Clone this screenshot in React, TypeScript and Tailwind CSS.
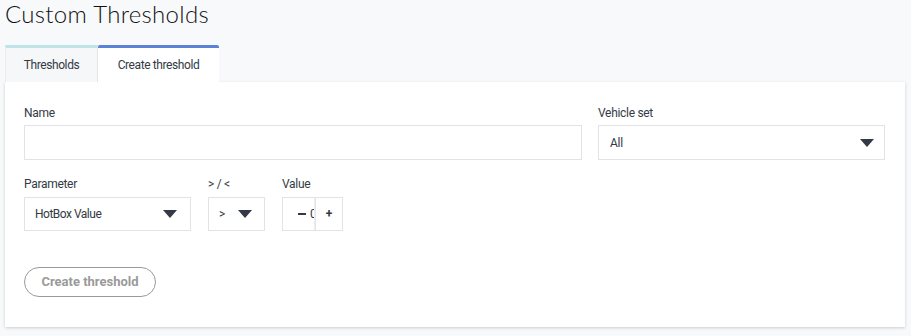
import React from "react";

const Caret = () => (
  <svg width="14" height="8" viewBox="0 0 14 8"><path d="M0 0 L14 0 L7 8 Z" fill="#333a45" /></svg>
);

export default function App() {
  return (
    <div className="w-[911px] h-[336px] bg-[#f8f9fb] overflow-hidden" style={{ fontFamily: "Roboto, 'Liberation Sans', sans-serif" }}>
      <div className="pl-[5px] pt-0 h-[45px]">
        <h1 className="text-[24px] leading-[27px] font-light text-[#111] tracking-[0.3px]" style={{ fontFamily: "Lato, Inter, sans-serif" }}>Custom Thresholds</h1>
      </div>
      <div className="flex pl-[5px]">
        <div className="w-[93px] h-[37px] border-t-[3px] border-[#bfe3e6] bg-[#f6f7f9] flex items-center justify-center text-[12px] tracking-[-0.4px] text-[#333a45] border-r border-r-[#e4e4e4] border-l border-l-[#ececec]">Thresholds</div>
        <div className="w-[121px] h-[37px] border-t-[3px] border-[#5b82d4] bg-white flex items-center justify-center text-[12px] tracking-[-0.4px] text-[#333a45] rounded-t-[2px]">Create threshold</div>
      </div>
      <div className="ml-[5px] w-[900px] h-[245px] bg-white shadow-[0_1px_3px_rgba(0,0,0,0.18)] px-[19px] pt-[24px]">
        <div className="flex gap-[16px]">
          <div className="w-[558px]">
            <div className="text-[12px] tracking-[-0.3px] text-[#333a45] leading-[14px] mb-[5px]">Name</div>
            <div className="h-[35px] border border-[#e3e3e6]" />
          </div>
          <div className="w-[287px]">
            <div className="text-[12px] tracking-[-0.3px] text-[#333a45] leading-[14px] mb-[5px]">Vehicle set</div>
            <div className="h-[35px] border border-[#e3e3e6] flex items-center justify-between pl-[11px] pr-[10px] text-[12px] tracking-[-0.3px] text-[#333a45]">
              <span>All</span>
              <Caret />
            </div>
          </div>
        </div>
        <div className="flex gap-[17px] mt-[17px]">
          <div className="w-[167px]">
            <div className="text-[12px] tracking-[-0.3px] text-[#333a45] leading-[14px] mb-[6px]">Parameter</div>
            <div className="h-[34px] border border-[#e3e3e6] flex items-center justify-between pl-[10px] pr-[13px] text-[12px] tracking-[-0.5px] text-[#333a45]">
              <span>HotBox Value</span>
              <Caret />
            </div>
          </div>
          <div className="w-[57px]">
            <div className="text-[12px] tracking-[-0.3px] text-[#333a45] leading-[14px] mb-[6px]">&gt; / &lt;</div>
            <div className="h-[34px] border border-[#e3e3e6] flex items-center justify-between pl-[10px] pr-[12px] text-[12px] text-[#333a45]">
              <span>&gt;</span>
              <Caret />
            </div>
          </div>
          <div className="w-[61px]">
            <div className="text-[12px] tracking-[-0.3px] text-[#333a45] leading-[14px] mb-[6px]">Value</div>
            <div className="h-[34px] border border-[#e3e3e6] flex items-stretch text-[#333a45]">
              <div className="w-[27px] flex items-center justify-end pr-[4px] text-[14px]">
                <span className="block w-[8px] h-[2px] bg-[#333a45]" />
              </div>
              <div className="w-[5px] overflow-hidden flex items-center text-[12px] border-r border-[#eeeeee] leading-none">0</div>
              <div className="flex-1 flex items-center justify-center border-l border-[#e3e3e6] text-[12px] font-bold">+</div>
            </div>
          </div>
        </div>
        <button className="mt-[36px] h-[30px] w-[132px] rounded-full border border-[#9a9a9a] text-[13px] font-bold text-[#9a9a9a] flex items-center justify-center">Create threshold</button>
      </div>
    </div>
  );
}
